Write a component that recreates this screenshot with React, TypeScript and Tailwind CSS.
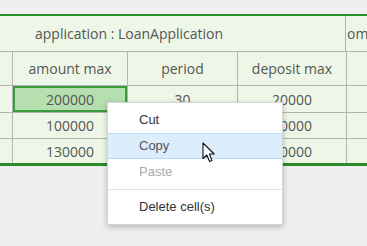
const cellText = "text-[14px] text-[#555] font-['Open_Sans',sans-serif]";

const rows = [
  { h: "h-[27px] border-b border-[#b3b3b3]", v: ["200000", "30", "20000"] },
  { h: "h-[26px] border-b border-[#b3b3b3]", v: ["100000", "30", "20000"] },
  { h: "h-[24px]", v: ["130000", "30", "20000"] },
];

const Cursor = () => (
  <svg width="14" height="21" viewBox="0 0 14 21" className="absolute left-[202px] top-[142px]">
    <path d="M1 1 L1 16.5 L4.8 13 L7.6 19.5 L10 18.4 L7.3 12 L12.2 12 Z" fill="#fff" stroke="#111" strokeWidth="1.1" strokeLinejoin="round" />
  </svg>
);

const App = () => {
  return (
    <div className="relative w-[367px] h-[246px] overflow-hidden bg-[#efefef]">
      <div className="pt-[14px]">
        <div className="border-t-2 border-b-[3px] border-[#2a8d2a] bg-[#eef7e7]">
          {/* header 1 */}
          <div className="flex h-[36px] border-b border-[#b3b3b3]">
            <div className={`w-[346px] shrink-0 border-r border-[#b3b3b3] flex items-center pl-[35px] ${cellText}`}>
              application : LoanApplication
            </div>
            <div className={`flex-1 overflow-hidden flex items-center pl-[1px] ${cellText}`}>om</div>
          </div>
          {/* header 2 */}
          <div className="flex h-[34px] border-b border-[#b3b3b3]">
            <div className="w-[13px] shrink-0 border-r border-[#b3b3b3]" />
            <div className={`w-[115px] shrink-0 border-r border-[#b3b3b3] flex items-center justify-center ${cellText}`}>amount max</div>
            <div className={`w-[110px] shrink-0 border-r border-[#b3b3b3] flex items-center justify-center ${cellText}`}>period</div>
            <div className={`w-[109px] shrink-0 border-r border-[#b3b3b3] flex items-center justify-center ${cellText}`}>deposit max</div>
            <div className="flex-1" />
          </div>
          {/* data */}
          {rows.map((r, i) => (
            <div key={i} className={`flex ${r.h}`}>
              <div className="w-[13px] shrink-0 border-r border-[#b3b3b3]" />
              <div
                className={`w-[115px] shrink-0 border-r border-[#b3b3b3] flex items-center justify-center ${cellText} ${
                  i === 0 ? "bg-[#b6dfb0] shadow-[inset_0_0_0_2px_#3b9a3b]" : ""
                }`}
              >
                {r.v[0]}
              </div>
              <div className={`w-[110px] shrink-0 border-r border-[#b3b3b3] flex items-center justify-center ${cellText}`}>{r.v[1]}</div>
              <div className={`w-[109px] shrink-0 border-r border-[#b3b3b3] flex items-center justify-center ${cellText}`}>{r.v[2]}</div>
              <div className="flex-1" />
            </div>
          ))}
        </div>
      </div>

      {/* context menu */}
      <div className="absolute left-[107px] top-[102px] w-[176px] bg-white border border-[#d6d6d6] shadow-[0_2px_6px_rgba(0,0,0,0.25)] py-[4px] font-['Liberation_Sans',Arial,sans-serif] text-[13px]">
        <div className="h-[26px] flex items-center pl-[31px] text-[#333]">Cut</div>
        <div className="h-[26px] flex items-center pl-[31px] text-[#555] bg-[#dcedfc] border-y border-[#b9dcf5]">Copy</div>
        <div className="h-[26px] flex items-center pl-[31px] text-[#aaa]">Paste</div>
        <div className="my-[4px] border-t border-[#e2e2e2]" />
        <div className="h-[26px] flex items-center pl-[31px] text-[#333]">Delete cell(s)</div>
      </div>
      <Cursor />
    </div>
  );
};

export default App;
